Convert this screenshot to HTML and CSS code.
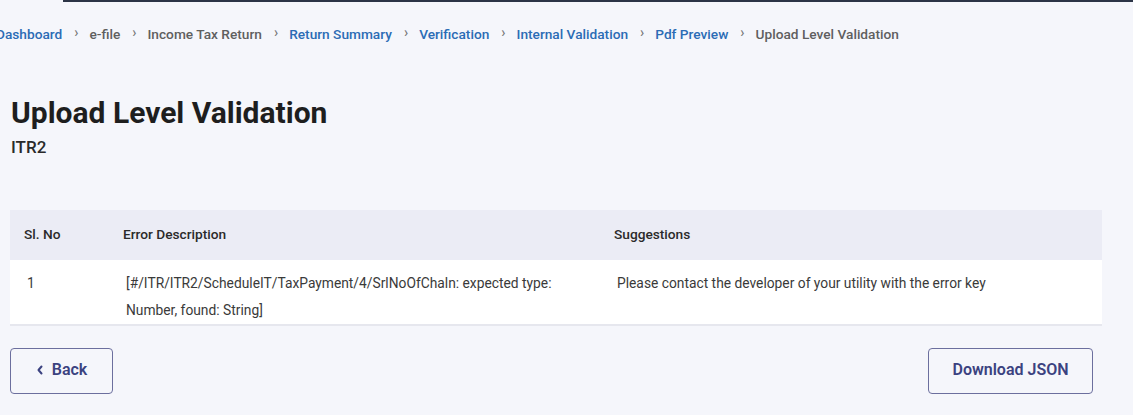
FILE: index.html
```html
<!DOCTYPE html>
<html lang="en">
<head>
    <meta charset="UTF-8">
    <meta name="viewport" content="width=device-width, initial-scale=1.0">
    <title>Upload Level Validation</title>
    <link rel="stylesheet" href="styles.css">
</head>
<body>
    <div class="top-bar"></div>
    <div class="page">
        <nav class="breadcrumb">
            <a class="crumb link">Dashboard</a>
            <span class="sep">&rsaquo;</span>
            <span class="crumb">e-file</span>
            <span class="sep">&rsaquo;</span>
            <span class="crumb">Income Tax Return</span>
            <span class="sep">&rsaquo;</span>
            <a class="crumb link">Return Summary</a>
            <span class="sep">&rsaquo;</span>
            <a class="crumb link">Verification</a>
            <span class="sep">&rsaquo;</span>
            <a class="crumb link">Internal Validation</a>
            <span class="sep">&rsaquo;</span>
            <a class="crumb link">Pdf Preview</a>
            <span class="sep">&rsaquo;</span>
            <span class="crumb">Upload Level Validation</span>
        </nav>

        <div class="heading">
            <h1 class="title">Upload Level Validation</h1>
            <p class="subtitle">ITR2</p>
        </div>

        <table class="error-table">
            <thead>
                <tr>
                    <th class="col-no">Sl. No</th>
                    <th class="col-desc">Error Description</th>
                    <th class="col-sugg">Suggestions</th>
                </tr>
            </thead>
            <tbody>
                <tr>
                    <td class="col-no">1</td>
                    <td class="col-desc">[#/ITR/ITR2/ScheduleIT/TaxPayment/4/SrlNoOfChaln: expected type: Number, found: String]</td>
                    <td class="col-sugg">Please contact the developer of your utility with the error key</td>
                </tr>
            </tbody>
        </table>

        <div class="actions">
            <button class="btn back-btn">
                <svg width="8" height="10" viewBox="0 0 8 10"><path d="M5.5 1.5 L2.5 5 L5.5 8.5" fill="none" stroke="currentColor" stroke-width="2" stroke-linecap="round" stroke-linejoin="round"/></svg>
                Back
            </button>
            <button class="btn download-btn">Download JSON</button>
        </div>
    </div>
</body>
</html>
```

FILE: styles.css
```css
:root {
    --bg-color: #f5f6fb;
    --link-color: #2b6cb5;
    --muted: #5f5f5f;
    --text-color: #222222;
    --head-bg: #ebecf5;
    --btn-color: #3b4280;
    --btn-border: #6c6f9e;
}

* {
    margin: 0;
    padding: 0;
    box-sizing: border-box;
    font-family: Roboto, 'Liberation Sans', Arial, sans-serif;
}

body {
    background-color: var(--bg-color);
    color: var(--text-color);
    width: 1133px;
    height: 415px;
    overflow: hidden;
}

.top-bar {
    height: 2px;
    margin-left: 63px;
    background-color: #2c3446;
}

.page {
    padding: 0 31px 0 10px;
}

.breadcrumb {
    display: flex;
    align-items: center;
    height: 64px;
    padding-bottom: 1px;
    margin-left: -14px;
    font-size: 13.7px;
    font-weight: 500;
    white-space: nowrap;
}

.crumb {
    color: var(--muted);
    text-decoration: none;
}

.crumb.link {
    color: var(--link-color);
}

.sep {
    color: #777777;
    font-size: 14px;
    margin: -3px 11px 0 12px;
}

.heading {
    padding: 29px 1px 0;
    height: 144px;
}

.title {
    font-size: 30px;
    font-weight: 700;
    line-height: 36px;
    color: #1e1e1e;
}

.subtitle {
    font-size: 17px;
    font-weight: 500;
    margin-top: 6px;
    color: #2a2a2a;
}

.error-table {
    width: 1092px;
    border-collapse: collapse;
    font-size: 13.8px;
}

.error-table th {
    background-color: var(--head-bg);
    height: 50px;
    padding-bottom: 3px;
    text-align: left;
    font-size: 13.7px;
    font-weight: 500;
    color: #2a2a2a;
    vertical-align: middle;
}

.error-table td {
    background-color: #ffffff;
    color: #3a3a3a;
    line-height: 27px;
    padding: 10px 0 0;
    height: 63px;
    vertical-align: top;
    border-bottom: 2px solid #e6e7ee;
}

.error-table .col-no {
    width: 113px;
    padding-left: 14px;
}

.error-table td.col-no {
    padding-left: 17px;
}

.error-table .col-desc {
    width: 491px;
    padding-right: 40px;
}

.error-table td.col-desc {
    padding-left: 3px;
}

.error-table td.col-sugg {
    padding-left: 3px;
}

.actions {
    display: flex;
    justify-content: space-between;
    margin-top: 22px;
    padding-right: 9px;
}

.btn {
    display: flex;
    align-items: center;
    justify-content: center;
    gap: 8px;
    height: 46px;
    padding-bottom: 3px;
    background: transparent;
    border: 1px solid var(--btn-border);
    border-radius: 4px;
    color: var(--btn-color);
    font-size: 16px;
    font-weight: 600;
    cursor: pointer;
}

.back-btn {
    width: 103px;
}

.download-btn {
    width: 165px;
}
```
